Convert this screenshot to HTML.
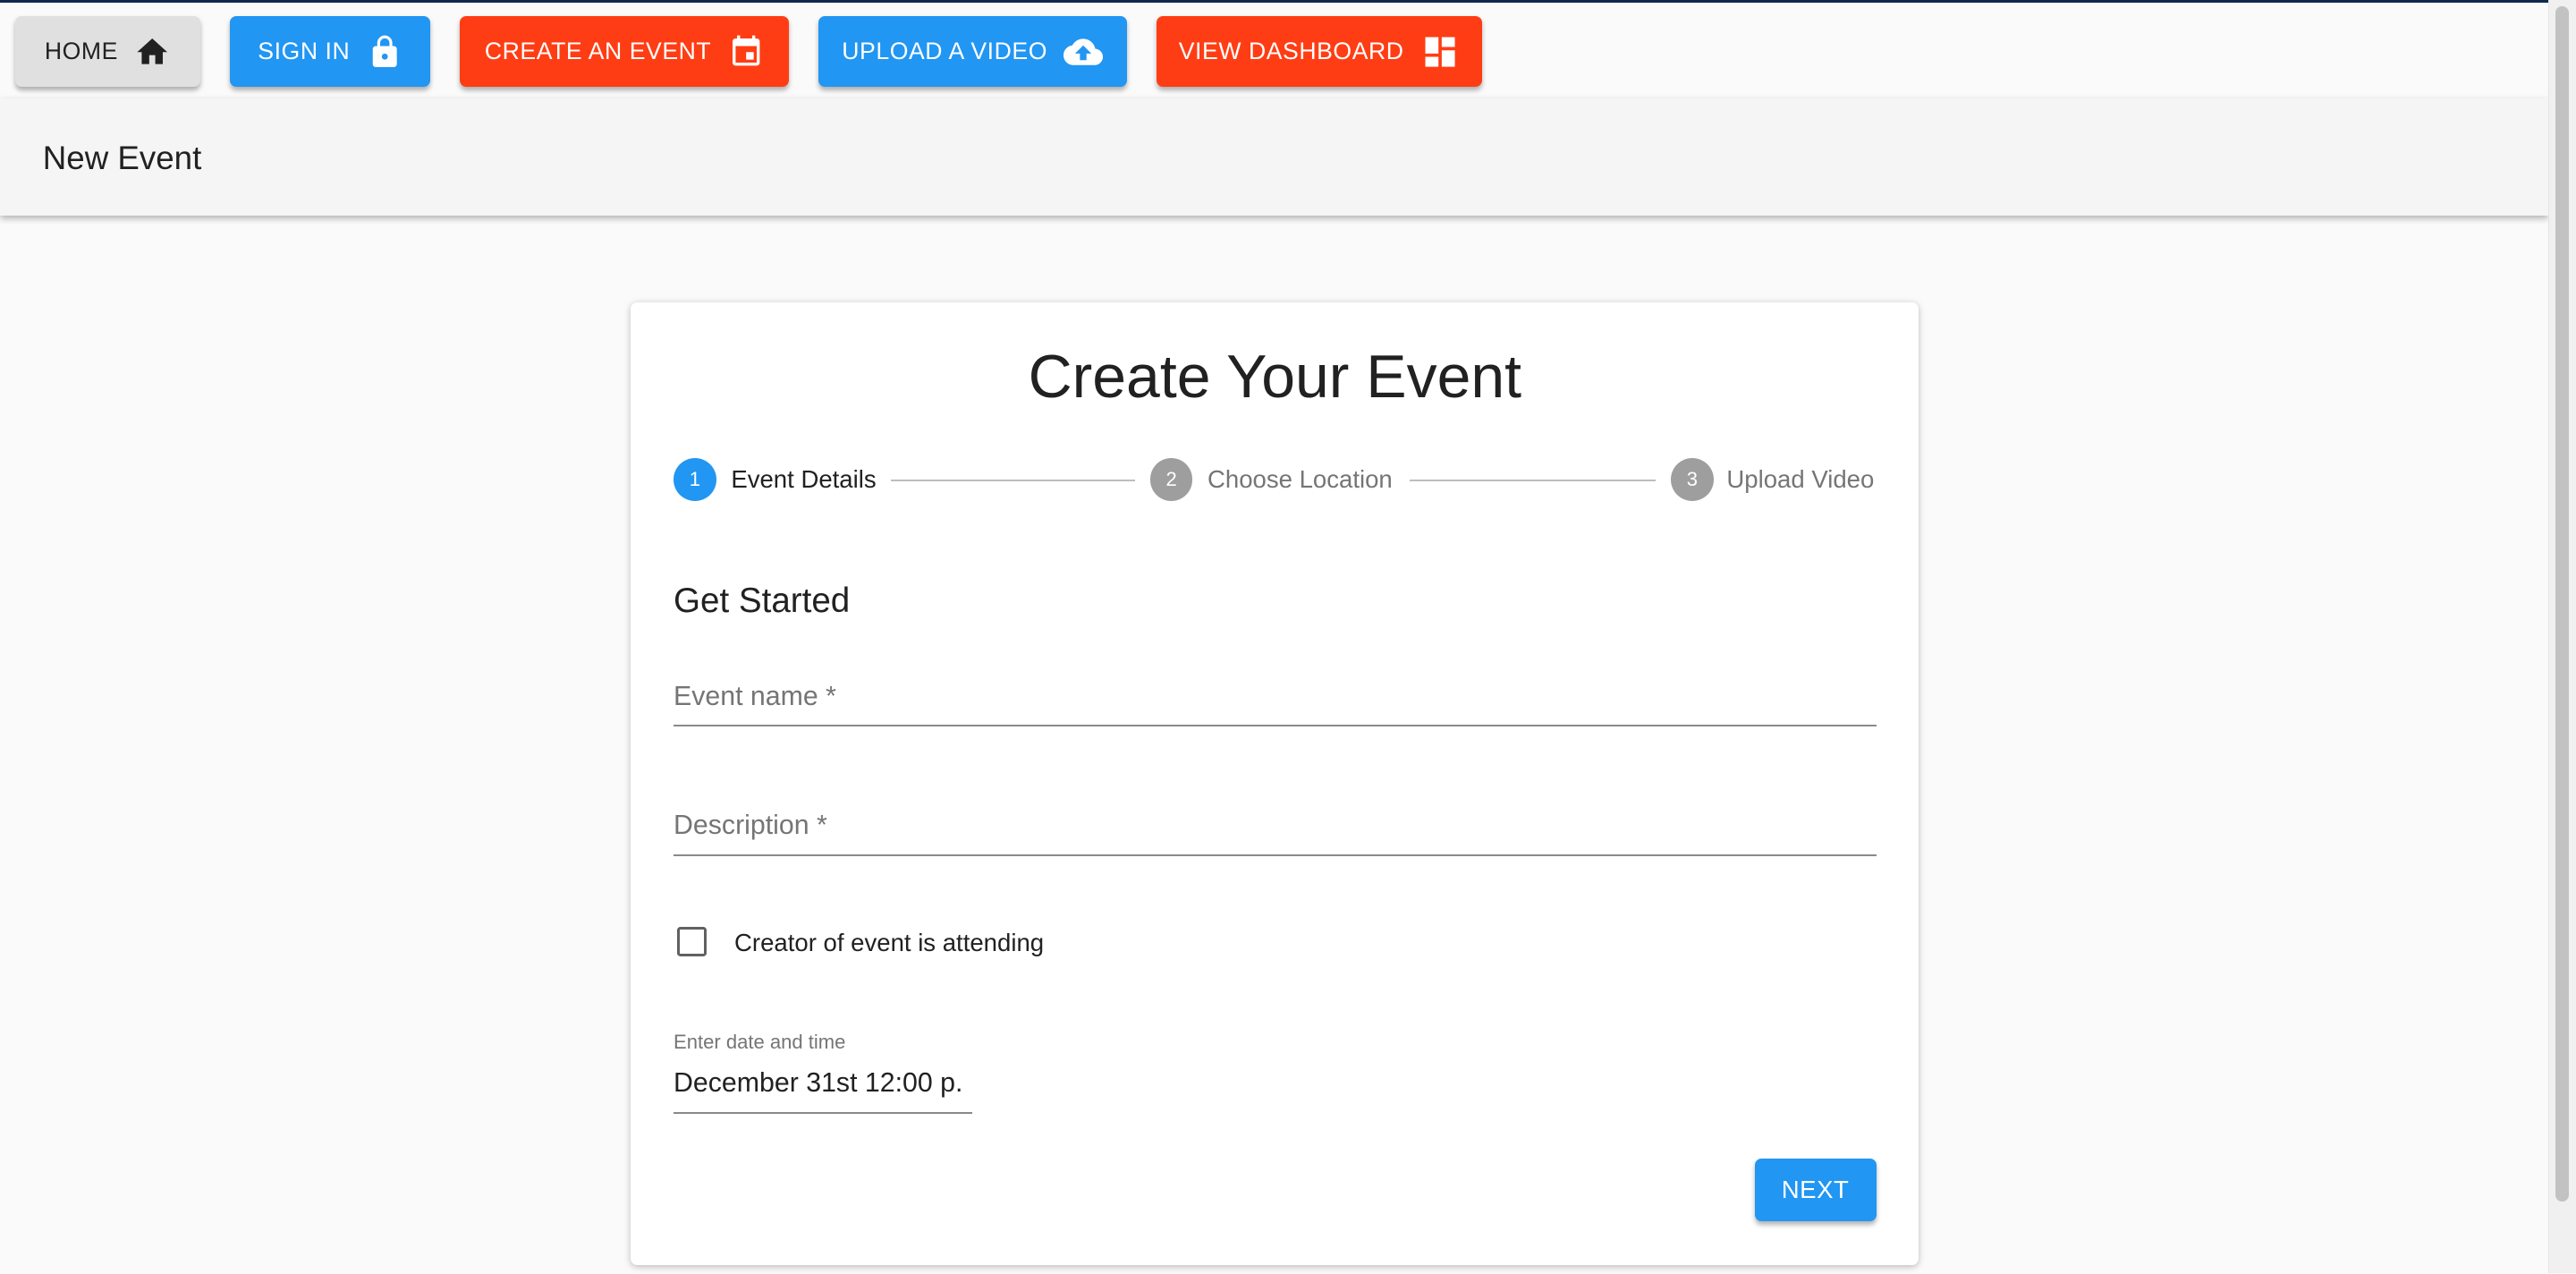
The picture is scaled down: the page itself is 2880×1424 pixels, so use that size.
<!DOCTYPE html>
<html><head><meta charset="utf-8"><style>
html,body{margin:0;padding:0;}
body{width:1568px;height:775px;zoom:1.836735;background:#fafafa;font-family:"Liberation Sans",sans-serif;position:relative;overflow:hidden;color:#212121;}
.topline{position:absolute;left:0;top:0;width:1568px;height:1.5px;background:#0d2a4d;}
.btn{position:absolute;top:10px;height:43px;border-radius:4px;box-shadow:0 2px 3px rgba(0,0,0,.3);display:flex;align-items:center;justify-content:center;font-size:14.5px;letter-spacing:.3px;color:#fff;gap:10px;}
.blue{background:#2196f3}.red{background:#ff3d14}
.hdr{position:absolute;left:0;top:60px;width:1551px;height:71px;background:#f5f5f5;box-shadow:0 2px 4px rgba(0,0,0,.3);}
.hdr span{position:absolute;left:26px;top:25px;font-size:20px;}
.card{position:absolute;left:384px;top:184px;width:784px;height:586px;background:#fff;border-radius:4px;box-shadow:0 1px 4px rgba(0,0,0,.25);}
.abs{position:absolute;}
.circ{position:absolute;width:26px;height:26px;border-radius:50%;color:#fff;font-size:12px;display:flex;align-items:center;justify-content:center;top:279px;}
.step{position:absolute;top:283px;font-size:15px;}
.line{position:absolute;top:292px;height:1px;background:#bdbdbd;}
.ul{position:absolute;height:1px;background:#8a8a8a;}
.sb{position:absolute;left:1551px;top:0;width:17px;height:775px;background:#f0f0f0;border-left:1px solid #e4e4e4;}
.sb div{position:absolute;left:4px;top:4px;width:8px;height:727px;border-radius:4px;background:#c2c2c2;}
</style></head><body>
<div class="topline"></div>
<div class="btn" style="left:9px;width:113px;background:#e0e0e0;color:#212121">HOME <svg width="22" height="22" viewBox="0 0 24 24"><path d="M10 20v-6h4v6h5v-8h3L12 3 2 12h3v8z" fill="#212121"/></svg></div>
<div class="btn blue" style="left:140px;width:122px">SIGN IN <svg width="22" height="22" viewBox="0 0 24 24"><path d="M18 8h-1V6c0-2.76-2.24-5-5-5S7 3.24 7 6v2H6c-1.1 0-2 .9-2 2v10c0 1.1.9 2 2 2h12c1.1 0 2-.9 2-2V10c0-1.1-.9-2-2-2zm-6 9c-1.1 0-2-.9-2-2s.9-2 2-2 2 .9 2 2-.9 2-2 2zm3.1-9H8.9V6c0-1.71 1.39-3.1 3.1-3.1 1.71 0 3.1 1.39 3.1 3.1v2z" fill="#fff"/></svg></div>
<div class="btn red" style="left:280px;width:200px">CREATE AN EVENT <svg width="22" height="22" viewBox="0 0 24 24"><path d="M17 12h-5v5h5v-5zM16 1v2H8V1H6v2H5c-1.11 0-2 .9-2 2v14c0 1.1.89 2 2 2h14c1.1 0 2-.9 2-2V5c0-1.1-.9-2-2-2h-1V1h-2zm3 18H5V8h14v11z" fill="#fff"/></svg></div>
<div class="btn blue" style="left:498px;width:188px">UPLOAD A VIDEO <svg width="24" height="24" viewBox="0 0 24 24"><path d="M19.35 10.04C18.67 6.59 15.64 4 12 4 9.11 4 6.6 5.64 5.35 8.04 2.34 8.36 0 10.91 0 14c0 3.31 2.69 6 6 6h13c2.76 0 5-2.24 5-5 0-2.64-2.05-4.78-4.65-4.96zM14 13v4h-4v-4H7l5-5 5 5h-3z" fill="#fff"/></svg></div>
<div class="btn red" style="left:704px;width:198px">VIEW DASHBOARD <svg width="24" height="24" viewBox="0 0 24 24"><path d="M3 13h8V3H3v10zm0 8h8v-6H3v6zm10 0h8V11h-8v10zm0-18v6h8V3h-8z" fill="#fff"/></svg></div>
<div class="hdr"><span>New Event</span></div>
<div class="card"></div>
<div class="abs" style="left:384px;width:784px;top:208px;text-align:center;font-size:37px;">Create Your Event</div>
<div class="circ" style="left:410px;background:#2196f3">1</div>
<div class="step" style="left:445px;color:#212121">Event Details</div>
<div class="line" style="left:542px;width:149px"></div>
<div class="circ" style="left:700px;background:#9e9e9e">2</div>
<div class="step" style="left:735px;color:#757575">Choose Location</div>
<div class="line" style="left:858px;width:150px"></div>
<div class="circ" style="left:1017px;background:#9e9e9e">3</div>
<div class="step" style="left:1051px;color:#757575">Upload Video</div>
<div class="abs" style="left:410px;top:354px;font-size:21px;">Get Started</div>
<div class="abs" style="left:410px;top:415px;font-size:16.5px;color:#757575">Event name *</div>
<div class="ul" style="left:410px;width:732px;top:441px"></div>
<div class="abs" style="left:410px;top:493px;font-size:16.5px;color:#757575">Description *</div>
<div class="ul" style="left:410px;width:732px;top:520px"></div>
<div class="abs" style="left:412px;top:564px;width:15px;height:15px;border:2px solid #616161;border-radius:2px"></div>
<div class="abs" style="left:447px;top:565px;font-size:15px;">Creator of event is attending</div>
<div class="abs" style="left:410px;top:627px;font-size:12px;color:#757575">Enter date and time</div>
<div class="abs" style="left:410px;top:650px;font-size:16.5px;">December 31st 12:00 p.</div>
<div class="ul" style="left:410px;width:182px;top:677px"></div>
<div class="btn blue" style="left:1068px;top:705px;width:74px;height:38px;font-size:15px">NEXT</div>
<div class="sb"><div></div></div>
</body></html>
